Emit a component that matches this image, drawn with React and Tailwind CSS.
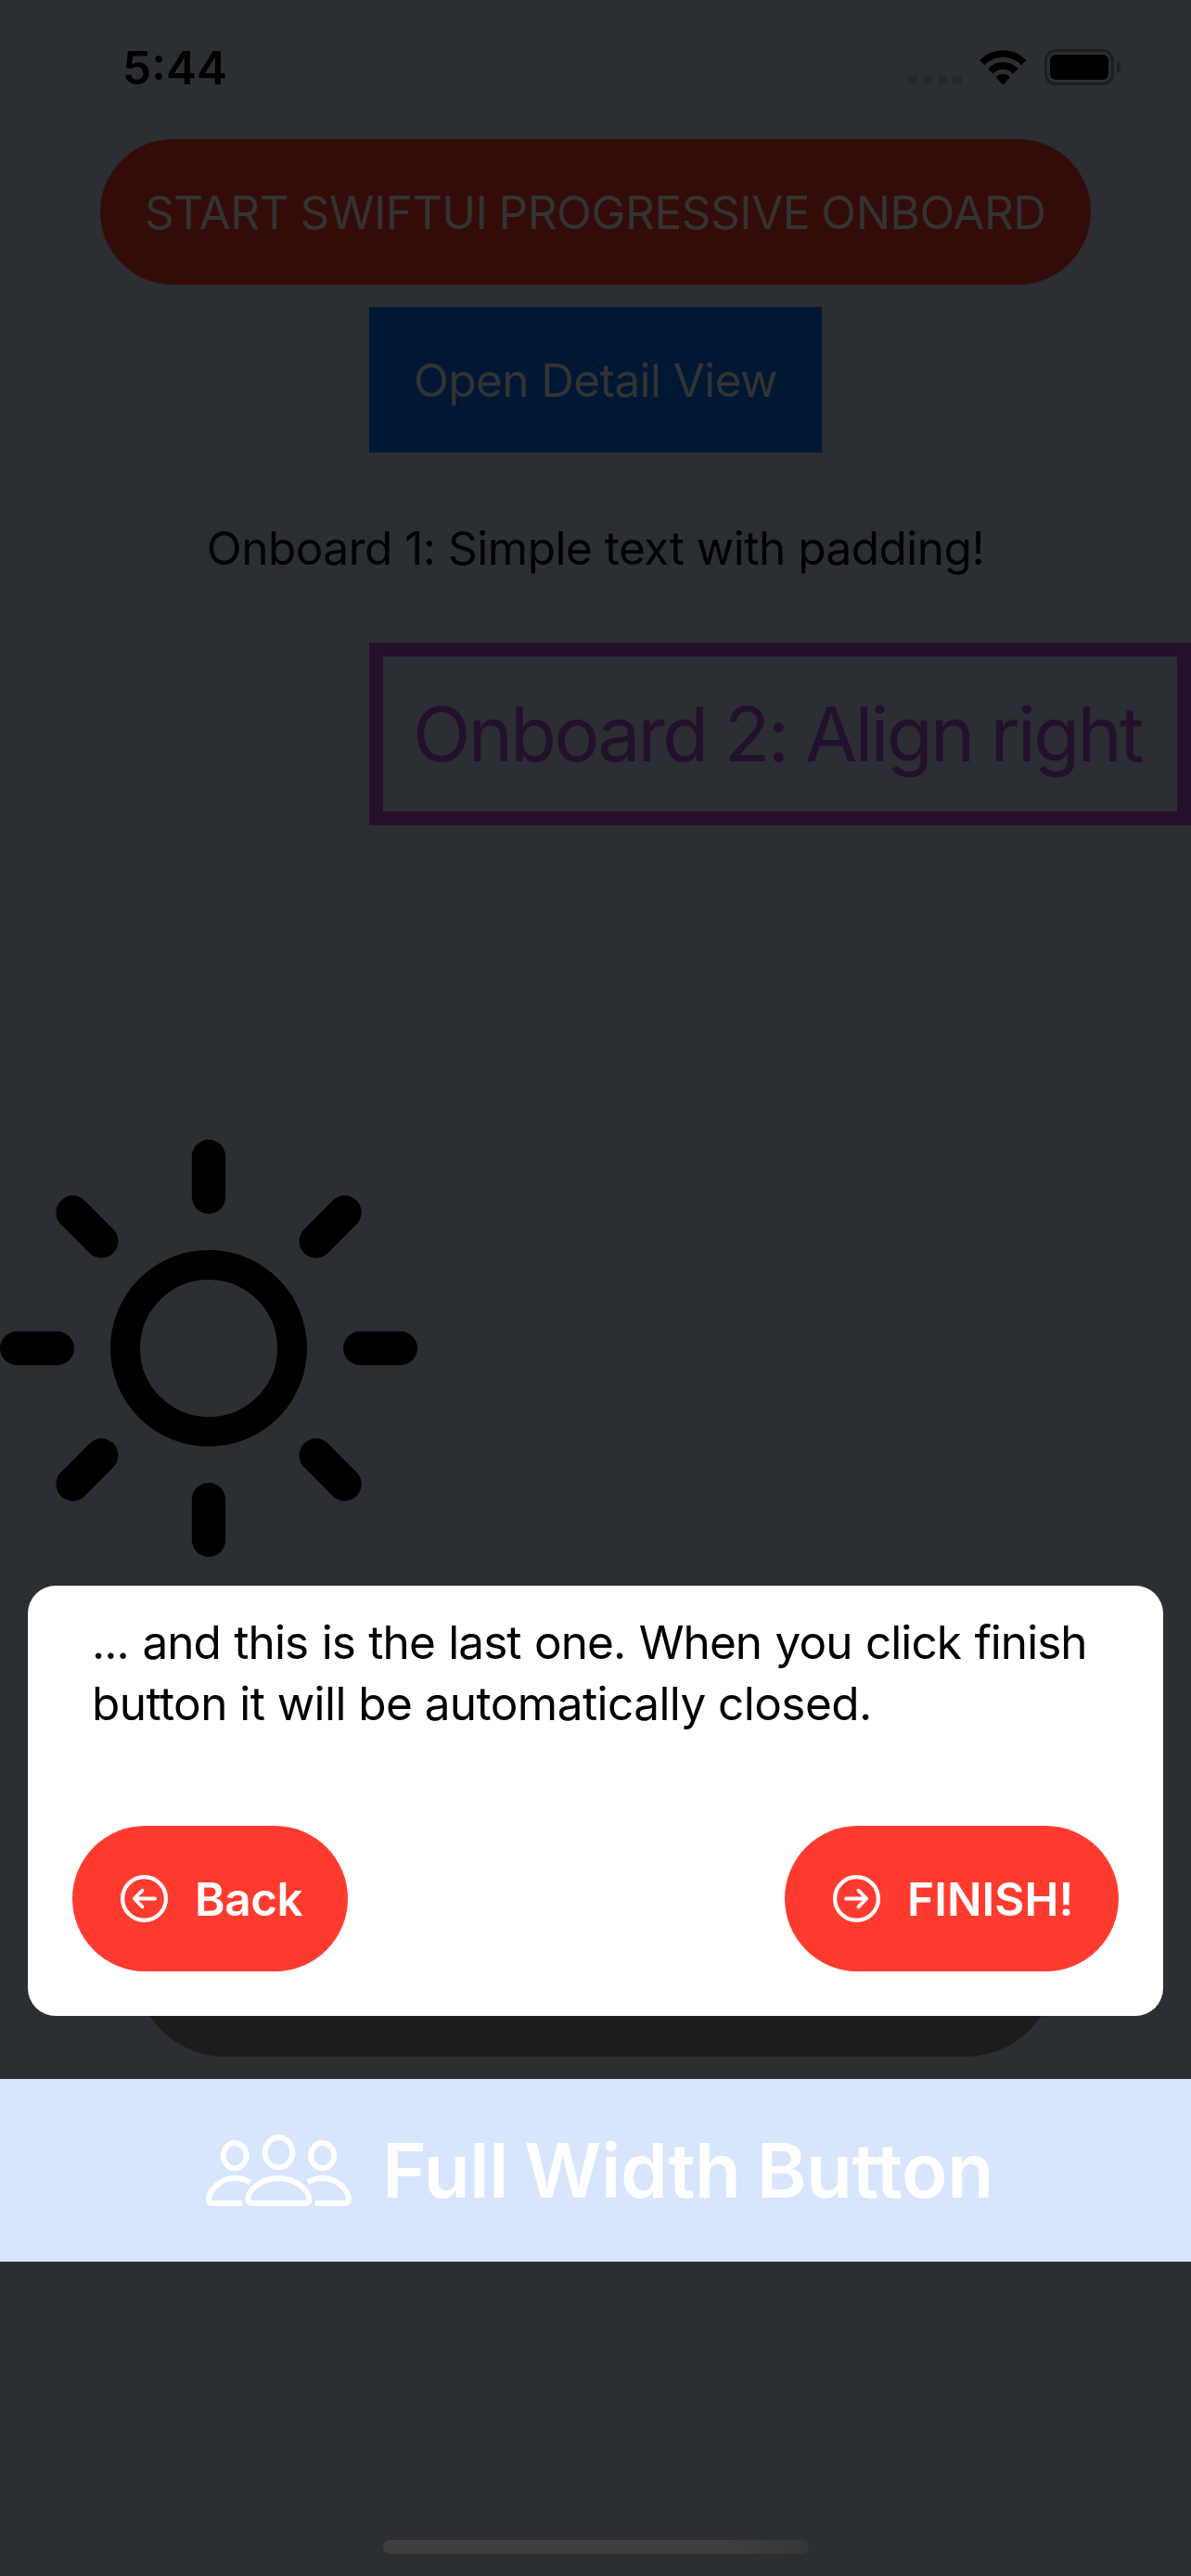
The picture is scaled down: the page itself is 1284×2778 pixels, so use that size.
function StatusBar() {
  return (
    <header className="flex h-[150px] shrink-0 items-start justify-between pr-[76px] pl-[132px]">
      <span className="mt-[43px] text-[49.5px] leading-[60px] font-semibold text-black">5:44</span>
      <div className="mt-[53px] flex h-[39px] items-start">
        <div className="mt-7 flex gap-1.5">
          <span className="size-2.5 rounded-[3px] bg-[#25282b]" />
          <span className="size-2.5 rounded-[3px] bg-[#25282b]" />
          <span className="size-2.5 rounded-[3px] bg-[#25282b]" />
          <span className="size-2.5 rounded-[3px] bg-[#25282b]" />
        </div>
        <svg className="mt-[0.6px] ml-[19px] h-[37.7px] w-[50.7px]" viewBox="318 71 152 113" fill="none">
          <path d="M326.5 112 A93 93 0 0 1 461.5 112" stroke="#000" strokeWidth="23" />
          <path d="M353.5 139.5 A54.8 54.8 0 0 1 434.5 139.5" stroke="#000" strokeWidth="23" />
          <path d="M371 158.500 A31 31 0 0 1 417 158.500 L396 182.500 Q394 184.500 392 182.500 Z" fill="#000" />
        </svg>
        <div className="ml-[19.3px] h-[39px] w-[75px] rounded-[12px] border-3 border-[#1c1e20] p-[3px]">
          <div className="h-full rounded-[6px] bg-black" />
        </div>
        <svg className="mt-[13px] ml-[3px] h-[13px] w-1" viewBox="0 0 4 13">
          <path d="M0 0 Q4 2 4 6.500 Q4 11 0 13 Z" fill="#1c1e20" />
        </svg>
      </div>
    </header>
  );
}

function SunIcon() {
  return (
    <svg className="h-[450px] w-[450px] shrink-0" viewBox="0 0 450 450" fill="none" stroke="#000" strokeLinecap="round">
      <circle cx="225" cy="225" r="90" strokeWidth="32" />
      <g strokeWidth="36.300">
        <path d="M225 18.150V61.850M225 388.150V431.850M18.150 225H61.850M388.150 225H431.850" />
        <path d="M78.500 78.500L109.300 109.500M371.500 78.500L340.700 109.500M78.500 371.500L109.300 340.500M371.500 371.500L340.700 340.500" />
      </g>
    </svg>
  );
}

function CircleArrow({ direction }) {
  return (
    <svg
      className={direction === "right" ? "size-[51px] shrink-0 -scale-x-100" : "size-[51px] shrink-0"}
      viewBox="0 0 51 51"
      fill="none"
      stroke="#fff"
      strokeLinecap="round"
      strokeLinejoin="round"
    >
      <circle cx="25.500" cy="25.500" r="23.400" strokeWidth="4.200" />
      <path d="M37 25.500H15M23.500 16.700L14.800 25.500L23.500 34.300" strokeWidth="3.800" />
    </svg>
  );
}

function PeopleIcon() {
  return (
    <svg className="h-[77px] w-[157px] shrink-0" viewBox="66 216 471 231" fill="none" stroke="#fff" strokeWidth="18">
      <ellipse cx="301.500" cy="273.500" rx="44.500" ry="48.500" />
      <ellipse cx="159.500" cy="284" rx="37.500" ry="41" />
      <ellipse cx="443" cy="284" rx="37.500" ry="41" />
      <path d="M218 438 Q202 438 202 425 C202 400 240 357 301.500 357 C363 357 400 400 400 425 Q400 438 385 438 Z" />
      <path d="M208 370 C194 361 179 357 160 357 C108 357 75 400 75 425 Q75 438 89 438 H184" />
      <path d="M395 370 C409 361 424 357 443 357 C495 357 528 400 528 425 Q528 438 514 438 H419" />
    </svg>
  );
}

function OnboardCard() {
  return (
    <section className="absolute inset-x-[30px] top-[1710px] flex h-[464px] flex-col justify-between rounded-[30px] bg-white px-12 pt-7 pb-12">
      <p className="pl-[21px] text-[49.5px] leading-[66px] whitespace-nowrap text-black">
        <span className="block tracking-[-0.95px] [word-spacing:1.5px]">... and this is the last one. When you click finish</span>
        <span className="block tracking-[-0.56px]">button it will be automatically closed.</span>
      </p>
      <div className="flex justify-between">
        <button className="flex h-[157px] w-[297px] items-center rounded-full bg-[#ff3b30] pl-[52px] text-[49.5px] font-semibold text-white">
          <CircleArrow direction="left" />
          <span className="ml-[29px] pt-px tracking-[-0.46px]">Back</span>
        </button>
        <button className="flex h-[157px] w-[360px] items-center rounded-full bg-[#ff3b30] pl-[52px] text-[49.5px] font-semibold text-white">
          <CircleArrow direction="right" />
          <span className="ml-[29px] pt-px tracking-[0.05px]">FINISH!</span>
        </button>
      </div>
    </section>
  );
}

export default function App() {
  return (
    <div className="relative flex h-[2778px] w-[1284px] flex-col overflow-hidden bg-[#2b2e32] font-[Inter,sans-serif]">
      <StatusBar />
      <main className="flex flex-1 flex-col items-center gap-6">
        <button className="h-[157px] w-[1068px] rounded-full bg-[#330c0a] pt-0.5 pl-12 text-left text-[49.5px] tracking-[-0.45px] whitespace-nowrap text-[#333333] [word-spacing:-1.3px]">
          START SWIFTUI PROGRESSIVE ONBOARD
        </button>
        <button className="h-[157px] w-[488px] bg-[#001833] pt-px pl-12 text-left text-[49.5px] tracking-[-0.6px] whitespace-nowrap text-[#333333]">
          Open Detail View
        </button>
        <p className="flex h-[157px] items-center pt-px text-[49.5px] tracking-[-0.5px] whitespace-nowrap text-black">
          Onboard 1: Simple text with padding!
        </p>
        <div className="flex h-[197px] w-[886px] items-center self-end border-[15px] border-[#23102c] pt-0.5 pl-8 text-[81.5px] tracking-[-2.65px] whitespace-nowrap text-[#23102c] [word-spacing:-1px]">
          Onboard 2: Align right
        </div>
        <div className="flex flex-1 flex-col justify-end self-start pb-[318px]">
          <SunIcon />
        </div>
        <div className="h-[197px] w-[994px] shrink-0 rounded-full bg-[#1c1c1d]" />
        <button className="flex h-[197px] w-full shrink-0 items-center bg-[#d7e6fc] pl-[222px] text-[81.5px] font-semibold tracking-[-0.4px] text-white">
          <PeopleIcon />
          <span className="ml-[33px] pt-px whitespace-nowrap [word-spacing:-3px]">Full Width Button</span>
        </button>
      </main>
      <footer className="flex h-[339px] shrink-0 items-end justify-center pb-6">
        <div className="h-[15px] w-[459px] rounded-full bg-linear-to-r from-[#3f3f40] from-80% to-[#353637]" />
      </footer>
      <OnboardCard />
    </div>
  );
}
